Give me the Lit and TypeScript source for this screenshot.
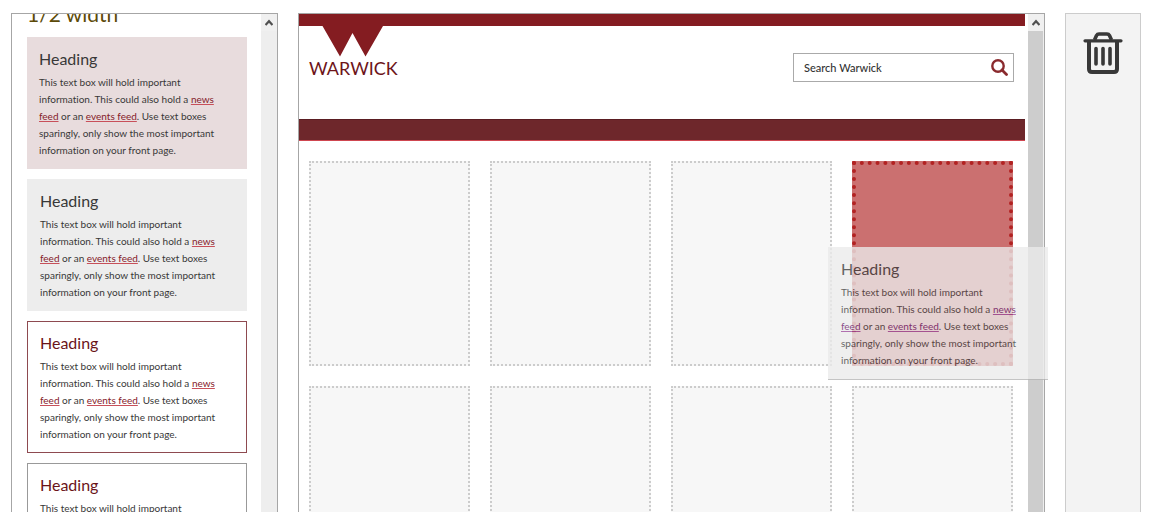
import { LitElement, html, css, svg } from "lit";
import { customElement, property } from "lit/decorators.js";

const chevron = svg`<path d="M0.5 7 L4 3.2 L7.5 7" fill="none" stroke="#505050" stroke-width="2.2" />`;

@customElement("text-box")
class TextBox extends LitElement {
  @property({ reflect: true }) variant = "rose";

  static styles = css`
    :host {
      display: block;
      box-sizing: border-box;
      min-height: 132px;
      padding: 12px 11px 10px 12px;
      color: #383838;
    }
    :host([variant="rose"]) { background: #e8dcdd; }
    :host([variant="grey"]) { background: #ededed; padding-left: 13px; }
    :host([variant="outline-red"]), :host([variant="outline-grey"]) {
      border: 1px solid #8e4a50;
      padding: 11px 10px 9px 12px;
    }
    :host([variant="outline-grey"]) { border-color: #999; }
    :host([variant="ghost"]) {
      background: #ebebeb;
      border-bottom: 1px solid #b4b4b4;
      opacity: 0.78;
      padding-left: 13px;
    }
    .title {
      margin: 0 0 5px;
      font-size: 16px;
      font-weight: 400;
      line-height: 20px;
    }
    :host([variant^="outline"]) .title { color: #6b1419; }
    .copy { margin: 0; font-size: 10px; line-height: 17px; font-variant-ligatures: none; }
    a { color: #85202a; text-decoration-color: #c8505a; }
    :host([variant="ghost"]) a { color: #6b1a6b; text-decoration-color: #9a4a9a; }
  `;

  render() {
    return html`
      <h3 class="title">Heading</h3>
      <p class="copy">
        This text box will hold important<br />
        information. This could also hold a <a href="#news">news<br />
        feed</a> or an <a href="#events">events feed</a>. Use text boxes<br />
        sparingly, only show the most important<br />
        information on your front page.
      </p>
    `;
  }
}

@customElement("app-root")
class AppRoot extends LitElement {
  static styles = css`
    :host { display: block; font-family: Lato, "Liberation Sans", sans-serif; }
    .page {
      box-sizing: border-box;
      height: 100vh;
      overflow: hidden;
      padding: 13px 18px 0 11px;
      display: grid;
      grid-template-columns: 267px minmax(0, 1fr) 76px;
      grid-template-rows: minmax(0, 1fr);
      gap: 20px;
      background: #fff;
    }
    .panel {
      box-sizing: border-box;
      display: flex;
      border: 1px solid #a6a6a6;
      border-bottom: 0;
      min-width: 0;
    }
    .library { overflow: hidden; }
    .list {
      flex: 1;
      display: flex;
      flex-direction: column;
      gap: 10px;
      padding: 0 14px 0 15px;
      margin-top: -13px;
    }
    .list text-box { flex: none; }
    .group { margin: 0; font-size: 21px; font-weight: 400; line-height: 26px; color: #5c4a08; }
    .scroll { flex: none; width: 16px; display: flex; flex-direction: column; background: #eee; }
    .arrow {
      height: 17px;
      flex: none;
      padding: 0;
      border: 0;
      background: #f0f0f0;
      display: flex;
      align-items: center;
      justify-content: center;
    }
    .thumb { flex: 1; background: #cdcdcd; margin-right: 1px; }
    .site { flex: 1; min-width: 0; margin-right: 3px; }
    .masthead {
      border-top: 12px solid #841c21;
      display: flex;
      justify-content: space-between;
      align-items: flex-start;
      height: 93px;
      padding: 0 11px 0 10px;
    }
    .logo { display: flex; flex-direction: column; align-items: center; color: #6d1419; }
    .mark { display: block; }
    .word { font-size: 18px; line-height: 22px; }
    .search {
      display: flex;
      align-items: center;
      box-sizing: border-box;
      width: 221px;
      height: 29px;
      margin-top: 27px;
      border: 1px solid #aaa;
      padding: 0 5px 0 10px;
    }
    .field {
      flex: 1;
      min-width: 0;
      border: 0;
      padding: 0;
      outline: 0;
      background: none;
      font: 500 11px Lato, sans-serif;
      color: #333;
    }
    .field::placeholder { color: #333; opacity: 1; }
    .go { border: 0; padding: 0; background: none; display: flex; }
    .nav { height: 20px; background: #6e272b; border-top: 1px solid #5a1d22; border-bottom: 1px solid #cf4650; }
    .slots {
      display: grid;
      grid-template-columns: repeat(4, minmax(0, 1fr));
      grid-auto-rows: 205px;
      gap: 20px;
      padding: 20px 12px 0 10px;
    }
    .slot { border: 2px dotted #ccc; background: #f7f7f7; }
    .target { position: relative; border: 4px dotted #b22222; background: #cb7070; }
    .ghost { position: absolute; left: -28px; top: 82px; width: 220px; z-index: 2; }
    .bin {
      box-sizing: border-box;
      border: 1px solid #ccc;
      border-bottom: 0;
      background: #f3f3f3;
      display: flex;
      justify-content: center;
      align-items: flex-start;
      padding-top: 17px;
    }
    .trash { border: 0; padding: 0; background: none; display: flex; }
  `;

  render() {
    const slots = [0, 1, 2, 3, 4, 5, 6, 7];
    const variants = ["rose", "grey", "outline-red", "outline-grey"];
    const arrow = html`<button class="arrow" aria-label="Scroll up">
      <svg width="8" height="9" viewBox="0 0 8 9">${chevron}</svg>
    </button>`;
    return html`
      <main class="page">
        <section class="panel library">
          <div class="list">
            <h2 class="group">1/2 width</h2>
            ${variants.map((v) => html`<text-box variant=${v}></text-box>`)}
          </div>
          <div class="scroll">${arrow}</div>
        </section>
        <section class="panel">
          <div class="site">
            <header class="masthead">
              <div class="logo">
                <svg class="mark" width="62" height="31" viewBox="0 0 62 31" aria-hidden="true">
                  <path d="M0.5 0H61L43.5 30.5L30.5 7L18 30.5Z" fill="#841c21" />
                </svg>
                <span class="word">WARWICK</span>
              </div>
              <form class="search">
                <input class="field" aria-label="Search Warwick" placeholder="Search Warwick" />
                <button class="go" type="button" aria-label="Search">
                  <svg width="17" height="17" viewBox="0 0 17 17" fill="none" stroke="#8a2a2e">
                    <circle cx="7" cy="7" r="5.7" stroke-width="2.4" />
                    <path d="M11 11L15.5 15.5" stroke-width="2.8" stroke-linecap="round" />
                  </svg>
                </button>
              </form>
            </header>
            <nav class="nav" aria-label="Site"></nav>
            <div class="slots">
              ${slots.map((i) =>
                i === 3
                  ? html`<div class="slot target"><text-box class="ghost" variant="ghost"></text-box></div>`
                  : html`<div class="slot"></div>`
              )}
            </div>
          </div>
          <div class="scroll">${arrow}<div class="thumb"></div></div>
        </section>
        <aside class="bin">
          <button class="trash" aria-label="Delete">
            <svg width="40" height="44" viewBox="0 0 40 44" fill="none" stroke="#383838">
              <path d="M11.5 9L13.5 4.5Q14.3 3 16 3H24Q25.7 3 26.5 4.5L28.5 9" stroke-width="3.6" />
              <path d="M2 9.8H38" stroke-width="3.2" stroke-linecap="round" />
              <path d="M6 10V38Q6 41 9 41H31Q34 41 34 38V10" stroke-width="4" />
              <path d="M13 17.5V33M20 17.5V33M27 17.5V33" stroke-width="3.6" stroke-linecap="round" />
            </svg>
          </button>
        </aside>
      </main>
    `;
  }
}
